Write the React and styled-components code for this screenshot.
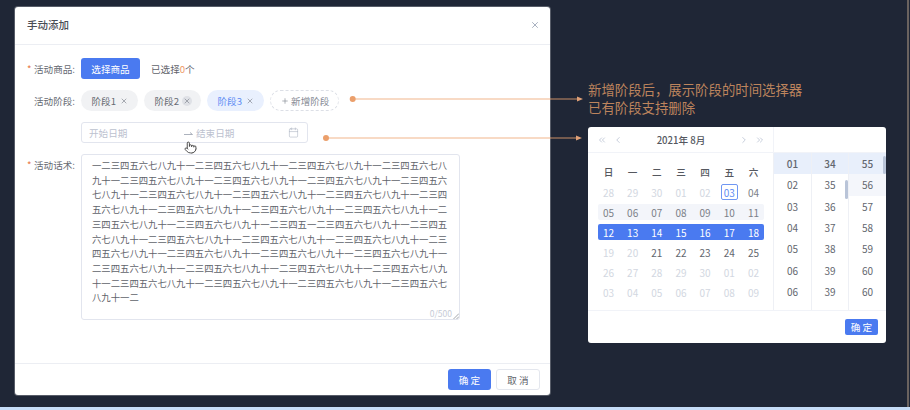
import styled, { createGlobalStyle } from "styled-components";
import {
  X,
  Plus,
  Calendar,
  Pointer,
  ChevronLeft,
  ChevronRight,
  ChevronsLeft,
  ChevronsRight,
} from "lucide-react";

const SCRIPT_TEXT =
  "一二三四五六七八九十一二三四五六七八九十一二三四五六七八九十一二三四五六七八" +
  "九十一二三四五六七八九十一二三四五六七八九十一二三四五六七八九十一二三四五六" +
  "七八九十一二三四五六七八九十一二三四五六七八九十一二三四五六七八九十一二三四" +
  "五六七八九十一二三四五六七八九十一二三四五六七八九十一二三四五六七八九十一二" +
  "三四五六七八九十一二三四五六七八九十一二三四五一二三四五六七八九十一二三四五" +
  "六七八九十一二三四五六七八九十一二三四五六七八九十一二三四五六七八九十一二三" +
  "四五六七八九十一二三四五六七八九十一二三四五六七八九十一二三四五六七八九十一" +
  "二三四五六七八九十一二三四五六七八九十一二三四五六七八九十一二三四五六七八九" +
  "十一二三四五六七八九十一二三四五六七八九十一二三四五六七八九十一二三四五六七" +
  "八九十一二";

const NOTE_FIRST_LINE = "新增阶段后\uFF0C展示阶段的时间选择器";

const WEEK_DAYS = ["日", "一", "二", "三", "四", "五", "六"];

const WEEKS = [
  {
    days: [
      ["28", "muted"],
      ["29", "muted"],
      ["30", "muted"],
      ["01", "muted"],
      ["02", "muted"],
      ["03", "today"],
      ["04", "soft"],
    ],
  },
  {
    tone: "hover",
    days: ["05", "06", "07", "08", "09", "10", "11"].map((d) => [d, "soft"]),
  },
  {
    tone: "active",
    days: ["12", "13", "14", "15", "16", "17", "18"].map((d) => [d, "active"]),
  },
  {
    days: [
      ["19", "muted"],
      ["20", "muted"],
      ["21", "normal"],
      ["22", "normal"],
      ["23", "normal"],
      ["24", "normal"],
      ["25", "normal"],
    ],
  },
  {
    days: ["26", "27", "28", "29", "30", "01", "02"].map((d) => [d, "muted"]),
  },
  {
    days: ["03", "04", "05", "06", "07", "08", "09"].map((d) => [d, "muted"]),
  },
];

const TIME_COLUMNS = [
  { values: ["01", "02", "03", "04", "05", "06", "06"], width: 38 },
  {
    values: ["34", "35", "36", "37", "38", "39", "39"],
    width: 37,
    thumb: { top: 27, height: 19 },
  },
  {
    values: ["55", "56", "57", "58", "59", "60", "60"],
    width: 38,
    hovered: 1,
    thumb: { top: 3, height: 18 },
  },
];

export default function App() {
  return (
    <Page>
      <GlobalStyle />
      <Stage>
        <Modal>
          <ModalHeader>
            <ModalTitle>手动添加</ModalTitle>
            <X size={10} color="#98a1b3" />
          </ModalHeader>

          <ModalBody>
            <FormRow>
              <FieldLabel $required>活动商品:</FieldLabel>
              <PrimaryButton $width={59}>选择商品</PrimaryButton>
              <SelectedCount>
                已选择<em>0</em>个
              </SelectedCount>
            </FormRow>

            <FormRow>
              <FieldLabel>活动阶段:</FieldLabel>
              <TagList>
                <Tag>
                  阶段1
                  <TagClose>
                    <X size={8} />
                  </TagClose>
                </Tag>
                <Tag>
                  阶段2
                  <TagClose $hovered>
                    <X size={8} />
                  </TagClose>
                </Tag>
                <Tag $active>
                  阶段3
                  <TagClose>
                    <X size={8} />
                  </TagClose>
                </Tag>
                <AddTag>
                  <Plus size={8} />
                  新增阶段
                </AddTag>
              </TagList>
            </FormRow>

            <FormRow>
              <FieldLabel />
              <RangeField>
                <RangeStart>开始日期</RangeStart>
                <svg width="9" height="6" viewBox="0 0 9 6" fill="none">
                  <path d="M0 4.5H8.5L6 2.5" stroke="#a3a9b6" strokeWidth="0.9" />
                </svg>
                <RangeEnd>结束日期</RangeEnd>
                <Calendar size={11} strokeWidth={1.2} color="#a9b0bf" />
                <HandCursor>
                  <Pointer size={13} fill="#fff" color="#333" strokeWidth={1.6} />
                </HandCursor>
              </RangeField>
            </FormRow>

            <FormRow $top>
              <FieldLabel $required $top>
                活动话术:
              </FieldLabel>
              <ScriptBox>
                <ScriptText>{SCRIPT_TEXT}</ScriptText>
                <Counter>0/500</Counter>
                <ResizeGrip width="6" height="6" viewBox="0 0 6 6">
                  <path d="M0.5 6L6 0.5M3.5 6L6 3.5" stroke="#8b8f98" strokeWidth="0.8" />
                </ResizeGrip>
              </ScriptBox>
            </FormRow>
          </ModalBody>

          <ModalFooter>
            <PrimaryButton $width={43}>确 定</PrimaryButton>
            <GhostButton>取 消</GhostButton>
          </ModalFooter>
        </Modal>

        <SidePanel>
          <Note>
            {NOTE_FIRST_LINE}
            <br />
            已有阶段支持删除
          </Note>

          <Picker>
            <PickerMain>
              <DatePane>
                <DateHead>
                  <NavGroup>
                    <ChevronsLeft size={10} />
                    <ChevronLeft size={10} />
                  </NavGroup>
                  <MonthTitle>2021年 8月</MonthTitle>
                  <NavGroup>
                    <ChevronRight size={10} />
                    <ChevronsRight size={10} />
                  </NavGroup>
                </DateHead>
                <DateBody>
                  <WeekRow>
                    {WEEK_DAYS.map((d) => (
                      <WeekDay key={d}>{d}</WeekDay>
                    ))}
                  </WeekRow>
                  {WEEKS.map((week, i) => (
                    <WeekRow key={i}>
                      <WeekStrip $tone={week.tone}>
                        {week.days.map(([d, kind]) => (
                          <DayCell key={d} $kind={kind}>
                            <span>{d}</span>
                          </DayCell>
                        ))}
                      </WeekStrip>
                    </WeekRow>
                  ))}
                </DateBody>
              </DatePane>

              <TimePane>
                <TimeHead />
                <TimeColumns>
                  {TIME_COLUMNS.map((col, c) => (
                    <TimeColumn key={c} $width={col.width}>
                      {col.values.map((v, i) => (
                        <TimeCell key={i} $selected={i === 0} $hovered={col.hovered === i}>
                          {v}
                        </TimeCell>
                      ))}
                      {col.thumb && <ScrollThumb $top={col.thumb.top} $height={col.thumb.height} />}
                    </TimeColumn>
                  ))}
                </TimeColumns>
              </TimePane>
            </PickerMain>

            <PickerFooter>
              <PickerConfirm>确 定</PickerConfirm>
            </PickerFooter>
          </Picker>
        </SidePanel>
      </Stage>
      <BottomStrip />

      <Leaders width="910" height="410" viewBox="0 0 910 410">
        <circle cx="352.7" cy="99" r="3" fill="#eb9f6b" />
        <circle cx="326" cy="138" r="3" fill="#eb9f6b" />
        <path d="M355 99H579M328 138H578" stroke="#eda672" strokeOpacity="0.55" strokeWidth="1.5" />
        <path d="M577 96.5L583 99L577 101.5ZM576 135.5L582 138L576 140.5Z" fill="#e0a077" />
      </Leaders>
    </Page>
  );
}

const GlobalStyle = createGlobalStyle`
  html, body {
    margin: 0;
    padding: 0;
    background: #1f2636;
  }

  * {
    box-sizing: border-box;
  }
`;

const Page = styled.div`
  position: relative;
  display: flex;
  flex-direction: column;

  width: 910px;
  height: 410px;
  overflow: hidden;

  background: #1f2636;
  font-family: "Noto Sans CJK SC", "Noto Sans", sans-serif;
  font-size: 9.6px;
  color: #5f636b;
`;

const Stage = styled.div`
  display: flex;
  align-items: flex-start;
  gap: 38px;

  width: 909px;
  height: 407px;
  padding: 7px 0 0 15px;

  border-right: 2px solid #6a625f;
`;

const BottomStrip = styled.div`
  height: 3px;
  background: #c5dcf7;
`;

const Leaders = styled.svg`
  position: absolute;
  top: 0;
  left: 0;
  pointer-events: none;
`;

const Modal = styled.div`
  display: flex;
  flex-direction: column;
  flex: none;

  width: 535px;
  height: 388px;

  background: #ffffff;
  border-radius: 3px;
  box-shadow: 0 0 0 1px rgba(255, 255, 255, 0.25);
`;

const ModalHeader = styled.div`
  display: flex;
  align-items: center;
  justify-content: space-between;

  height: 38px;
  padding: 0 10px 2px 12px;

  border-bottom: 1px solid #eceef3;
`;

const ModalTitle = styled.div`
  font-size: 10.5px;
  font-weight: 500;
  color: #4a4d55;
`;

const ModalBody = styled.div`
  display: flex;
  flex-direction: column;
  flex: 1;
  gap: 11px;

  padding: 13px 0 0 12px;
`;

const FormRow = styled.div`
  display: flex;
  align-items: ${(p) => (p.$top ? "flex-start" : "center")};
  min-height: 21px;
`;

const FieldLabel = styled.div`
  display: flex;
  justify-content: flex-end;
  flex: none;

  width: 54px;
  padding-right: 6px;
  padding-top: ${(p) => (p.$top ? "4px" : "0")};

  color: #666a72;
  white-space: nowrap;

  &::before {
    content: "${(p) => (p.$required ? "*" : "")}";
    margin-right: auto;
    color: #e8794a;
  }
`;

const PrimaryButton = styled.button`
  flex: none;

  width: ${(p) => p.$width}px;
  height: 21px;
  padding: 0;

  border: none;
  border-radius: 3px;
  background: #4a7af0;

  font-family: inherit;
  font-size: 9.6px;
  color: #ffffff;
`;

const GhostButton = styled.button`
  flex: none;

  width: 44px;
  height: 21px;
  padding: 0;

  border: 1px solid #e4e7ee;
  border-radius: 3px;
  background: #ffffff;

  font-family: inherit;
  font-size: 9.6px;
  color: #5f636b;
`;

const SelectedCount = styled.div`
  margin-left: 11px;
  color: #5f636b;

  em {
    font-style: normal;
    color: #ee9a66;
  }
`;

const TagList = styled.div`
  display: flex;
  align-items: center;
  gap: 6px;
`;

const Tag = styled.div`
  display: flex;
  align-items: center;
  gap: 3px;

  height: 21px;
  padding: 0 9px 0 10.5px;

  border-radius: 11px;
  background: ${(p) => (p.$active ? "#e9f0fe" : "#f1f2f4")};
  color: ${(p) => (p.$active ? "#5e8cf4" : "#666a72")};
`;

const TagClose = styled.span`
  display: flex;
  align-items: center;
  justify-content: center;

  width: 10px;
  height: 10px;

  border-radius: 50%;
  background: ${(p) => (p.$hovered ? "#dfe1e6" : "transparent")};
  color: #80858f;
`;

const AddTag = styled.div`
  display: flex;
  align-items: center;
  gap: 2px;

  height: 21px;
  padding: 0 9px 0 10px;

  border: 1px dashed #dcdfe6;
  border-radius: 11px;
  color: #868b95;
`;

const RangeField = styled.div`
  position: relative;
  display: flex;
  align-items: center;

  width: 227px;
  height: 21px;
  padding: 0 8px 0 7px;

  border: 1px solid #e2e5ee;
  border-radius: 3px;
  color: #bcc2cf;
`;

const RangeStart = styled.span`
  flex: none;
  width: 95px;
`;

const RangeEnd = styled.span`
  flex: 1;
  margin-left: 3px;
`;

const HandCursor = styled.span`
  position: absolute;
  top: 18px;
  left: 102px;
  display: flex;
`;

const ScriptBox = styled.div`
  position: relative;

  width: 379px;
  height: 166px;
  padding: 3px 10px;

  border: 1px solid #e2e5ee;
  border-radius: 3px;
`;

const ScriptText = styled.div`
  width: 356px;

  font-size: 9.35px;
  line-height: 14.7px;
  color: #5f636b;
  word-break: break-all;
`;

const Counter = styled.span`
  position: absolute;
  right: 7px;
  bottom: 0;

  font-size: 8.5px;
  color: #c6cbd6;
`;

const ResizeGrip = styled.svg`
  position: absolute;
  right: 0;
  bottom: 0;
`;

const ModalFooter = styled.div`
  display: flex;
  align-items: center;
  justify-content: flex-end;
  gap: 5px;

  height: 32px;
  padding: 0 10px 0 0;

  border-top: 1px solid #eceef3;
`;

const SidePanel = styled.div`
  display: flex;
  flex-direction: column;
  gap: 11px;
  flex: none;

  width: 298px;
  padding-top: 73px;
`;

const Note = styled.div`
  font-size: 13.4px;
  line-height: 18px;
  color: #bd845d;
  white-space: nowrap;
`;

const Picker = styled.div`
  display: flex;
  flex-direction: column;

  height: 216px;

  background: #ffffff;
  border-radius: 3px;
`;

const PickerMain = styled.div`
  display: flex;
  height: 183px;
`;

const DatePane = styled.div`
  flex: none;
  width: 185px;
`;

const DateHead = styled.div`
  display: flex;
  align-items: center;
  justify-content: space-between;

  height: 26px;
  padding: 0 8px 0 9px;

  border-bottom: 1px solid #f1f3f8;
`;

const NavGroup = styled.div`
  display: flex;
  gap: 6px;
  color: #bcc4d4;
`;

const MonthTitle = styled.div`
  font-size: 9.6px;
  font-weight: 500;
  color: #55585f;
`;

const DateBody = styled.div`
  padding: 9px 9px 0 10px;
`;

const WeekRow = styled.div`
  display: flex;
  align-items: center;
  justify-content: space-between;
  height: 20px;
`;

const WeekDay = styled.span`
  width: 21px;

  font-weight: 500;
  text-align: center;
  color: #55585f;
`;

const stripBackgrounds = {
  hover: "#f3f5fa",
  active: "#4a7af0",
};

const WeekStrip = styled.div`
  display: flex;
  align-items: center;
  justify-content: space-between;

  width: 100%;
  height: 16px;

  border-radius: 2px;
  background: ${(p) => stripBackgrounds[p.$tone] || "transparent"};
`;

const dayColors = {
  muted: "#d2d7e1",
  soft: "#7b7f88",
  normal: "#62666e",
  today: "#5e8cf4",
  active: "#ffffff",
};

const DayCell = styled.span`
  display: flex;
  justify-content: center;

  width: 21px;
  font-size: 10px;
  color: ${(p) => dayColors[p.$kind]};

  span {
    display: flex;
    align-items: center;
    justify-content: center;

    width: 17px;
    height: 16px;

    border: ${(p) => (p.$kind === "today" ? "1px solid #6f97f3" : "none")};
    border-radius: 2px;
  }
`;

const TimePane = styled.div`
  flex: 1;
`;

const TimeHead = styled.div`
  height: 26px;
  border-bottom: 1px solid #f1f3f8;
  border-left: 1px solid #f1f3f8;
`;

const TimeColumns = styled.div`
  display: flex;
  height: 157px;
`;

const TimeColumn = styled.div`
  position: relative;
  flex: none;

  width: ${(p) => p.$width}px;
  border-left: 1px solid #eef0f5;
`;

const TimeCell = styled.div`
  display: flex;
  align-items: center;
  justify-content: center;

  height: 21.33px;

  font-size: 10px;
  font-weight: ${(p) => (p.$selected ? 500 : 400)};
  color: #62666e;
  background: ${(p) => (p.$selected ? "#e8effb" : p.$hovered ? "#f4f6fb" : "transparent")};
`;

const ScrollThumb = styled.div`
  position: absolute;
  top: ${(p) => p.$top}px;
  right: 0;

  width: 3px;
  height: ${(p) => p.$height}px;

  border-radius: 2px;
  background: #b9c4d8;
`;

const PickerFooter = styled.div`
  display: flex;
  align-items: center;
  justify-content: flex-end;

  height: 33px;
  padding: 0 8px 0 0;

  border-top: 1px solid #f1f3f8;
`;

const PickerConfirm = styled.button`
  width: 33px;
  height: 16px;
  padding: 0;

  border: none;
  border-radius: 2px;
  background: #4a7af0;

  font-family: inherit;
  font-size: 9.6px;
  color: #ffffff;
`;
